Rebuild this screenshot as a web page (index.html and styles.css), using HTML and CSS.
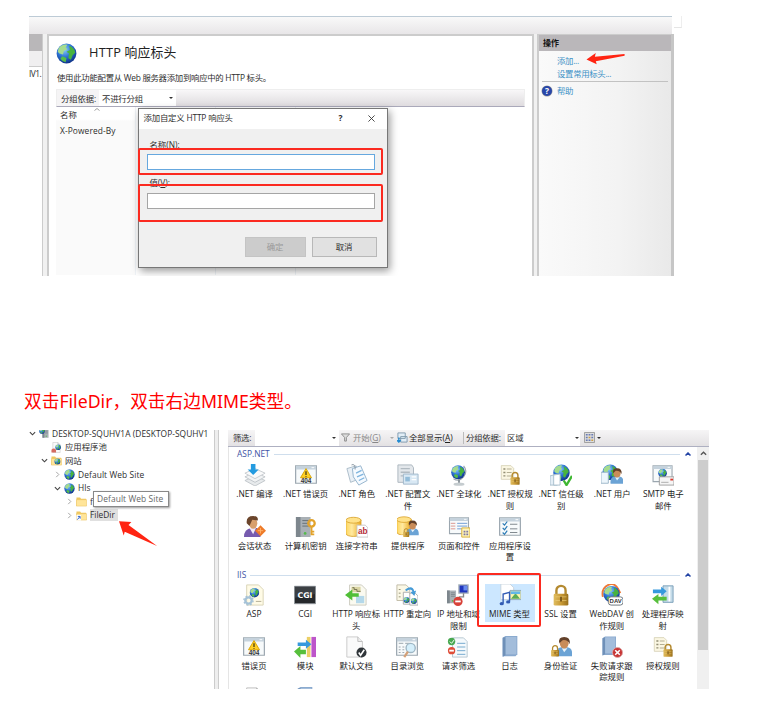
FILE: index.html
```html
<!DOCTYPE html>
<html>
<head>
<meta charset="utf-8">
<title>IIS</title>
<link rel="stylesheet" href="styles.css">
</head>
<body>
<svg class="sprite" width="0" height="0">
  <defs>
    <radialGradient id="sea" cx=".4" cy=".3" r=".75"><stop offset="0" stop-color="#8fd0fa"/><stop offset=".5" stop-color="#2d73d4"/><stop offset="1" stop-color="#0b2c80"/></radialGradient>
    <linearGradient id="gold" x2="1"><stop offset="0" stop-color="#e0bd60"/><stop offset=".5" stop-color="#c99a35"/><stop offset="1" stop-color="#99701c"/></linearGradient>
    <linearGradient id="can" x2="1"><stop offset="0" stop-color="#ffd75e"/><stop offset=".4" stop-color="#ffe9a0"/><stop offset="1" stop-color="#eba91c"/></linearGradient>
    <symbol id="globe" viewBox="0 0 24 24"><circle cx="12" cy="12" r="11.3" fill="url(#sea)"/><path d="M3 6Q7 1 13 2L11 5 13 7 9 9 8 13 4 12 2 10Z" fill="#a5dc8e"/><path d="M15 3Q21 5 22 11L19 14 17 19 14 17 15 12 12 10 16 8Z" fill="#48b33e"/><path d="M7 15L12 17 11 22Q7 21 5 18Z" fill="#56bd48"/></symbol>
    <symbol id="lock" viewBox="0 0 24 24"><path d="M7 12V7a5 5 0 0 1 10 0v5" fill="none" stroke="#b48a30" stroke-width="2.6"/><rect x="4" y="10.500" width="16" height="13" rx="1.500" fill="url(#gold)"/><path d="M6 14h12M6 18h12" stroke="#edce7c" stroke-width=".7"/><path d="M12 14v5" stroke="#76551a" stroke-width="2"/></symbol>
    <symbol id="page" viewBox="0 0 24 24"><path d="M4 1h11l5 5v17H4z" fill="#fafafa" stroke="#bbb"/><path d="M15 1v5h5" fill="#ddd" stroke="#aaa"/></symbol>
    <symbol id="rules" viewBox="0 0 24 24"><path d="M2 1h14l4 4v16H2z" fill="#fbf7e3" stroke="#cfc9ab"/><path d="M5 6h3M5 11h3M5 16h3" stroke="#918d74" stroke-width="2"/><path d="M10 6h7M10 11h7M10 16h7" stroke="#b3ae93" stroke-width="1.500"/></symbol>
    <symbol id="person" viewBox="0 0 24 24"><path d="M2 24Q1 14 8 13h8q7 1 6 11z" fill="#6ba3d5"/><path d="M9 14l3 5 4-5z" fill="#e6f2fa"/><ellipse cx="12" cy="8" rx="5.500" ry="6.500" fill="#c98c59"/><path d="M6 8Q4 0 12 0t7 9Q16 3 10 4Z" fill="#63412a"/></symbol>
    <symbol id="disk" viewBox="0 0 24 24"><path d="M2 4v16c0 5 18 5 18 0V4z" fill="url(#can)" stroke="#d79e27"/><ellipse cx="11" cy="4.500" rx="9" ry="3.500" fill="#ffe28a" stroke="#d9a32d"/></symbol>
    <symbol id="server" viewBox="0 0 24 24"><path d="M3 1h16v22H3z" fill="#a9b0b5"/><path d="M3 1h5v22H3z" fill="#7d868d"/><path d="M10 5h7M10 8h7M10 11h7" stroke="#646d74"/><circle cx="13" cy="19" r="1.500" fill="#54ba4b"/></symbol>
    <symbol id="window" viewBox="0 0 24 24"><path d="M.7 2h22.600v19H.7z" fill="#f7fafb" stroke="#9ba6af" stroke-width="1.300"/><path d="M1 2h22v4H1z" fill="#c5d2dc"/><path d="M18 4h3" stroke="#fff"/></symbol>
    <symbol id="folder" viewBox="0 0 24 24"><path d="M1 3h8l2 3h11v16H1z" fill="#efc75e"/><path d="M1 8h22v14H1z" fill="#ffe59a" stroke="#e8bd55"/></symbol>

    <symbol id="i-compile" viewBox="0 0 24 24"><path d="M1 18l11-5 11 5-11 6z" fill="#e7eaec" stroke="#c0c5c9"/><path d="M1 14l11-5 11 5-11 6z" fill="#f2f4f5" stroke="#c0c5c9"/><path d="M1 10l11-5 11 5-11 6z" fill="#fafafa" stroke="#c6cbcf"/><path d="M7.500 0h5v6H16l-6 6-6-6h3.500z" fill="#249be0"/></symbol>
    <symbol id="i-404" viewBox="0 0 24 24"><use href="#window"/><path d="M12 5l6 10H6z" fill="#ffcf24" stroke="#d9a300"/><path d="M12 8v4M12 13v1" stroke="#473b13" stroke-width="1.400"/><text x="12" y="20.500" text-anchor="middle" class="g404">404</text></symbol>
    <symbol id="i-roles" viewBox="0 0 24 24"><path d="M1 5l10-3 4 14-10 4z" fill="#e9f0f6" stroke="#a9bac7"/><path d="M7 5l9-3 7 16-9 5-6-9z" fill="#f5faff" stroke="#8fb0ca"/><path d="M11 10l6-3M12 14l7-3M14 18l6-3" stroke="#7eb4de" stroke-width="1.500"/><path d="M6 1q4-2 4 5" fill="none" stroke="#8794a0"/></symbol>
    <symbol id="i-profile" viewBox="0 0 24 24"><path d="M1 1h15l2 3v16H1z" fill="#e3e7eb" stroke="#a9b4bc"/><path d="M4 5h10M4 9h10M4 13h6" stroke="#b1bac1" stroke-width="1.500"/><path d="M7 11h16v11H7z" fill="#d8e8f4" stroke="#a0b8ca"/><path d="M9 14h5v5H9z" fill="#93bcd9"/><path d="M16 14h5M16 17h5" stroke="#fff" stroke-width="1.500"/></symbol>
    <symbol id="i-global" viewBox="0 0 24 24"><path d="M17 2q5 6 0 12t-11 2" fill="none" stroke="#9ba6ad" stroke-width="1.300"/><path d="M12 17v4" stroke="#858f96" stroke-width="2"/><ellipse cx="12" cy="22" rx="6" ry="1.700" fill="#c5cccf"/><use href="#globe" x="3" y="1" width="16" height="16"/></symbol>
    <symbol id="i-auth" viewBox="0 0 24 24"><use href="#rules" x="1" width="18" height="20"/><use href="#lock" x="10" y="7" width="15" height="17"/></symbol>
    <symbol id="i-trust" viewBox="0 0 24 24"><use href="#globe" x="3" width="19" height="19"/><path d="M0 13l8-2v12H0z" fill="#e3eef6" stroke="#a5bccb"/><path d="M4 12l7-1v12H4z" fill="#fff" stroke="#a5bccb"/><path d="M15 18l3 5 6-10" fill="none" stroke="#3eb731" stroke-width="2.500"/></symbol>
    <symbol id="i-users" viewBox="0 0 24 24"><use href="#globe" x="1" width="18" height="18"/><path d="M0 9h8v12H0z" fill="#edf6fc" stroke="#99b4c7"/><use href="#person" x="9" y="2" width="17" height="22"/></symbol>
    <symbol id="i-smtp" viewBox="0 0 24 24"><use href="#window" height="22" width="23"/><use href="#globe" x="6" y="5" width="11" height="10"/><path d="M8 14h16v9H8z" fill="#f5f5f5" stroke="#9d9d9d"/><path d="M20 16h3v2h-3z" fill="#d8382c"/><path d="M10 20h8" stroke="#aaa"/></symbol>
    <symbol id="i-session" viewBox="0 0 24 24"><path d="M0 23Q0 14 8 13h6q4 2 4 10z" fill="#765bae"/><path d="M6 13l4 7 3-7z" fill="#f1e9f6"/><ellipse cx="10" cy="8" rx="4.500" ry="6" fill="#d8a06d"/><path d="M3 8Q2 0 10 0q6 0 5 5L9 4 6 11Z" fill="#6b452b"/><path d="M18 10l6 6-6 6-6-6z" fill="#ee7a28"/><path d="M15 16h6M18 13v6" stroke="#ffb26c"/></symbol>
    <symbol id="i-key" viewBox="0 0 24 24"><use href="#server" x="-2" width="24" height="24"/><circle cx="18" cy="8" r="3.500" fill="none" stroke="#e3a32b" stroke-width="2.500"/><path d="M18 11v10M18 17h3M18 20h3" stroke="#e3a32b" stroke-width="2"/></symbol>
    <symbol id="i-conn" viewBox="0 0 24 24"><use href="#disk" x="-2" width="22" height="23"/><path d="M12 10h9l3 3v10H12z" fill="#fff" stroke="#c8c8c8"/><text x="13" y="20" class="gab">ab</text></symbol>
    <symbol id="i-provider" viewBox="0 0 24 24"><use href="#disk" x="-2" width="21" height="21"/><use href="#person" x="9" y="3" width="16" height="20"/><use href="#lock" x="5" y="12" width="10" height="12"/></symbol>
    <symbol id="i-controls" viewBox="0 0 24 24"><use href="#window" height="22" width="24"/><path d="M3 8h5M3 11h5M3 14h5" stroke="#d99289"/><path d="M10 8h11M10 11h11M10 14h5" stroke="#6798d2"/><path d="M15 13h9v10h-9z" fill="#fff4b9" stroke="#d4ac34"/><path d="M17 16h2v2h-2zM20 16h2v2h-2zM17 19h2v2h-2zM20 19h2v2h-2z" fill="#7f78a4"/></symbol>
    <symbol id="i-settings" viewBox="0 0 24 24"><use href="#window"/><path d="M4 8l2 2 3-4M4 13l2 2 3-4M4 18l2 2 3-4" fill="none" stroke="#2a7ab5" stroke-width="1.300"/><path d="M12 9h8M12 14h8M12 18h8" stroke="#767f86"/></symbol>
    <symbol id="gear" viewBox="0 0 24 24"><circle cx="12" cy="12" r="7" fill="none" stroke="#a5c2d7" stroke-width="5"/><circle cx="12" cy="12" r="10" fill="none" stroke="#a5c2d7" stroke-width="3" stroke-dasharray="4 3.850"/></symbol>
    <symbol id="i-asp" viewBox="0 0 24 24"><path d="M4 1h13l5 5v17H4z" fill="#fffbe6" stroke="#d8d2b5"/><use href="#globe" x="7" y="4" width="11" height="11"/><use href="#gear" x="0" y="12" width="12" height="12"/><path d="M14 19h6" stroke="#b0ab93"/></symbol>
    <symbol id="i-cgi" viewBox="0 0 24 24"><path d="M.5 2.500h23v19H.5z" fill="#25282b" stroke="#90979c"/><path d="M1 3h22v8L1 15z" fill="#3b3f43"/><text x="12" y="15" text-anchor="middle" class="gcgi">CGI</text></symbol>
    <symbol id="i-head" viewBox="0 0 24 24"><path d="M5 1h13l5 5v17H5z" fill="#fbfaf0" stroke="#c9c8bc"/><path d="M7 3h10v6H7z" fill="#d9d4a3"/><path d="M8 4h2v2h3v2h4" fill="none" stroke="#716e4d"/><path d="M12 13h9v8h-9z" fill="#b4d8ea"/><path d="M0 12l8-6v4h7v4H8v4z" fill="#51bf37"/></symbol>
    <symbol id="i-redir" viewBox="0 0 24 24"><path d="M1 1h10l4 4v13H1z" fill="#fbf8e6" stroke="#bfbaa5"/><path d="M3 6h2M3 10h2M3 14h2" stroke="#8e8b70"/><path d="M8 9h6l3 3v10H8z" fill="#fff" stroke="#aaa"/><path d="M15 10h6l3 3v10h-9z" fill="#fff" stroke="#aaa"/><use href="#globe" x="8" y="14" width="7" height="7"/><use href="#globe" x="16" y="15" width="7" height="7"/><path d="M10 6q8-6 10 2l2-1-2 6-4-4 2-1q-2-4-7 0z" fill="#459bd7"/></symbol>
    <symbol id="i-ip" viewBox="0 0 24 24"><use href="#server" x="-2" y="5" width="15" height="18"/><path d="M13 1h10v9H13z" fill="#2036bd" stroke="#a8b4bb" stroke-width="1.500"/><path d="M18 2h4v5h-4z" fill="#688bee"/><path d="M18 10v4h-5" fill="none" stroke="#888" stroke-width="1.500"/><circle cx="12" cy="19" r="5" fill="#d84138"/><path d="M9 19h6" stroke="#fff" stroke-width="2"/></symbol>
    <symbol id="i-mime" viewBox="0 0 24 24"><path d="M2 0h10l4 4v13H2z" fill="#fff" stroke="#c8d3dc"/><path d="M12 7h12v10H12z" fill="#fff6aa" stroke="#8aa9bb"/><path d="M13 16l5-6 5 6z" fill="#5bab57"/><path d="M13 8h10v3H13z" fill="#62b7e8"/><path d="M4.500 21V11l7-2v10" fill="none" stroke="#315bb4" stroke-width="1.500"/><ellipse cx="3" cy="21.500" rx="2.300" ry="1.800" fill="#315bb4"/><ellipse cx="10" cy="19.500" rx="2.300" ry="1.800" fill="#315bb4"/></symbol>
    <symbol id="i-dav" viewBox="0 0 24 24"><path d="M2 14Q0 5 8 1t13 9" fill="none" stroke="#ee7936" stroke-width="2"/><use href="#globe" x="2" y="1" width="19" height="20"/><rect x="8" y="14" width="16" height="9" rx="3" fill="#fff" stroke="#677077"/><text x="16" y="21" text-anchor="middle" class="gdav">DAV</text></symbol>
    <symbol id="i-handler" viewBox="0 0 24 24"><path d="M12 2h11v18H12z" fill="#c4dbe9" stroke="#789eb7"/><path d="M19 3v16" stroke="#fff" stroke-width="2"/><path d="M1 6h9V3l6 5-6 5v-3H1z" fill="#3699dd"/><path d="M0 16l7-5v3h9v4H7v4z" fill="#57bf3c"/></symbol>
    <symbol id="i-module" viewBox="0 0 24 24"><path d="M14 1h4v22h-4z" fill="#ebcf65"/><path d="M19 1h5v22h-5z" fill="#bd55ca"/><path d="M4 7h9V4l6 5-6 5v-3H4z" fill="#3699dd"/><path d="M0 17l7-6v4h6v5H7v4z" fill="#57bf3c"/></symbol>
    <symbol id="i-doc" viewBox="0 0 24 24"><path d="M2 1h12l5 5v17H2z" fill="#fafafa" stroke="#c8c8c8"/><path d="M14 1v5h5" fill="#eee" stroke="#bbb"/><circle cx="18" cy="18" r="5.500" fill="#30363a"/><path d="M15 18l2 3 4-6" fill="none" stroke="#fff" stroke-width="1.700"/></symbol>
    <symbol id="i-browse" viewBox="0 0 24 24"><use href="#window"/><path d="M3 8h5M10 8h5M3 12h2M7 12h2M3 15h2M7 15h2M3 18h2M7 18h2" stroke="#96a1aa"/><circle cx="16" cy="13" r="5" fill="#d5effb" stroke="#9eb6c4" stroke-width="1.500"/><path d="M13 17l-4 6" stroke="#d3a078" stroke-width="2.500"/></symbol>
    <symbol id="i-filter" viewBox="0 0 24 24"><path d="M6 2h12l4 4v17H6z" fill="#f4f9fc" stroke="#b5c5cf"/><path d="M11 8h9M11 12h9M11 16h9M11 20h9" stroke="#6ba3cb"/><circle cx="5" cy="6" r="4" fill="#47a850"/><path d="M3 6l2 2 3-4" fill="none" stroke="#fff"/><circle cx="5" cy="16" r="4" fill="#df4c38"/><path d="M2.500 16h5" stroke="#fff" stroke-width="2"/></symbol>
    <symbol id="i-log" viewBox="0 0 24 24"><path d="M4 2l3-2h13v20l-2 2H4z" fill="#89a9ce"/><path d="M7 1h12v19H7z" fill="#a3bddb"/><path d="M4 2l3-1v20l-3 2z" fill="#6f90b8"/></symbol>
    <symbol id="i-ident" viewBox="0 0 24 24"><use href="#person" x="5" width="21" height="23"/><use href="#lock" x="-1" y="8" width="13" height="16"/></symbol>
    <symbol id="i-fail" viewBox="0 0 24 24"><use href="#i-log" x="-2" width="22" height="23"/><circle cx="18" cy="18" r="5.500" fill="#c83535" stroke="#dcaaaa"/><path d="M15.500 15.500l5 5M20.500 15.500l-5 5" stroke="#fff" stroke-width="1.700"/></symbol>
    <symbol id="down" viewBox="0 0 8 8"><path d="M1 2.500l3 3 3-3" fill="none" stroke="#444" stroke-width="1.300"/></symbol>
    <symbol id="right" viewBox="0 0 8 8"><path d="M2.500 1l3 3-3 3" fill="none" stroke="#999"/></symbol>
  </defs>
</svg>

<main class="article">
  <section class="shot headers">
    <div class="topbar"></div>
    <div class="workspace">
      <div class="sliver"><div class="sliver-head"></div><div class="sliver-tool"></div><div class="sliver-text">IV1.</div></div>
      <div class="panel">
        <div class="panel-head"><svg><use href="#globe"/></svg><h1>HTTP 响应标头</h1></div>
        <p class="desc">使用此功能配置从 Web 服务器添加到响应中的 HTTP 标头。</p>
        <div class="groupbar"><span class="grouplabel">分组依据:</span><span class="groupselect">不进行分组<i class="tri"></i></span></div>
        <div class="list"><div class="col first"><span>名称</span><span>X-Powered-By</span><svg class="sort" viewBox="0 0 6 3"><path d="M.5 2.500L3 .5l2.500 2" fill="none" stroke="#777" stroke-width=".7"/></svg></div><div class="col"></div><div class="col"></div></div>
        <div class="dialog">
          <div class="dialog-title"><span>添加自定义 HTTP 响应头</span><b>?</b><svg viewBox="0 0 8 8"><path d="M.5.5l7 7M7.500.5l-7 7" stroke="#333"/></svg></div>
          <div class="dialog-body">
            <label>名称(N):</label><div class="field active"></div>
            <label class="second">值(<u>V</u>):</label><div class="field"></div>
            <div class="buttons"><span class="btn disabled">确定</span><span class="btn">取消</span></div>
          </div>
          <div class="mark name"></div><div class="mark value"></div>
        </div>
      </div>
      <aside class="actions">
        <h2>操作</h2>
        <a>添加...</a><a>设置常用标头...</a>
        <div class="help"><span class="qmark">?</span><a>帮助</a></div>
        <svg class="arrow" viewBox="0 0 42 14"><path d="M0 7L10 0l-1 4 32-3v2L10 9l1 3z" fill="#ff2412"/></svg>
      </aside>
      <div class="edge"></div>
    </div>
    <div class="corner"></div>
  </section>

  <p class="caption">双击FileDir，双击右边MIME类型。</p>

  <section class="shot manager">
    <div class="tree">
      <div class="node l0"><svg class="exp"><use href="#down"/></svg><svg class="ico" viewBox="0 0 24 24"><use href="#server" x="5" width="20" height="24"/><use href="#globe" width="13" height="13"/></svg><span>DESKTOP-SQUHV1A (DESKTOP-SQUHV1</span></div>
      <div class="node l1"><i class="exp"></i><svg class="ico" viewBox="0 0 24 24"><use href="#page" width="24" height="24"/><use href="#globe" x="9" y="5" width="13" height="13"/><path d="M1 17q5-6 10 0v6H1z" fill="#d56b60"/></svg><span>应用程序池</span></div>
      <div class="node l1"><svg class="exp"><use href="#down"/></svg><svg class="ico" viewBox="0 0 24 24"><use href="#folder"/><use href="#globe" x="7" y="7" width="14" height="14"/></svg><span>网站</span></div>
      <div class="node l2"><svg class="exp"><use href="#right"/></svg><svg class="ico"><use href="#globe"/></svg><span>Default Web Site</span></div>
      <div class="node l2"><svg class="exp"><use href="#down"/></svg><svg class="ico"><use href="#globe"/></svg><span>Hls</span></div>
      <div class="node l3"><svg class="exp"><use href="#right"/></svg><svg class="ico"><use href="#folder"/></svg><span>f</span></div>
      <div class="node l3 sel"><svg class="exp"><use href="#right"/></svg><svg class="ico" viewBox="0 0 24 24"><use href="#folder"/><path d="M1 11h10v12H1z" fill="#fff"/><path d="M3 21l5-6M4 14h5v5" fill="none" stroke="#285dc4" stroke-width="2"/></svg><span>FileDir</span></div>
      <div class="tip">Default Web Site</div>
      <svg class="point" viewBox="0 0 42 28"><path d="M0 0l13 1-3 3L40 26 6 11l-1 4z" fill="#ff2412"/></svg>
    </div>
    <div class="split"></div>
    <div class="features">
      <div class="toolbar">
        <span class="tl">筛选:</span><span class="filterbox"><i class="tri"></i></span>
        <svg class="funnel" viewBox="0 0 10 10"><path d="M.5 1h9L6 5v4H4V5z" fill="#ddd" stroke="#888"/></svg><span class="go">开始(<u>G</u>)</span><i class="tri dim"></i>
        <svg class="showall" viewBox="0 0 12 12"><path d="M1 1h8v6H1zM4 5h7v6H4z" fill="#e2eef7" stroke="#7e98ac"/><path d="M2 6v5M0 9l2 2 2-2" fill="none" stroke="#238bd1" stroke-width="1.500"/></svg><span class="all">全部显示(<u>A</u>)</span>
        <span class="gl">分组依据:</span><span class="areabox">区域<i class="tri"></i></span>
        <svg class="view" viewBox="0 0 12 12"><path d="M.5.5h11v11H.5z" fill="#ddd" stroke="#999"/><path d="M2 3h2M5 3h2M8 3h2M2 6h2M8 6h2M2 9h2M5 9h2" stroke="#697bb2" stroke-width="1.500"/><path d="M5 6h2M8 9h2" stroke="#cf9f43" stroke-width="1.500"/></svg><i class="tri"></i>
      </div>
      <div class="content">
        <div class="groups">
          <div class="group-title"><span>ASP.NET</span><hr><svg viewBox="0 0 6 4"><path d="M.5 3.500L3 1l2.500 2.500" fill="none" stroke="#2445a5" stroke-width="1.500"/></svg></div>
          <div class="grid">
            <div class="item"><svg><use href="#i-compile"/></svg><span>.NET 编译</span></div>
            <div class="item"><svg><use href="#i-404"/></svg><span>.NET 错误页</span></div>
            <div class="item"><svg><use href="#i-roles"/></svg><span>.NET 角色</span></div>
            <div class="item"><svg><use href="#i-profile"/></svg><span>.NET 配置文<br>件</span></div>
            <div class="item"><svg><use href="#i-global"/></svg><span>.NET 全球化</span></div>
            <div class="item"><svg><use href="#i-auth"/></svg><span>.NET 授权规<br>则</span></div>
            <div class="item"><svg><use href="#i-trust"/></svg><span>.NET 信任级<br>别</span></div>
            <div class="item"><svg><use href="#i-users"/></svg><span>.NET 用户</span></div>
            <div class="item"><svg><use href="#i-smtp"/></svg><span>SMTP 电子<br>邮件</span></div>
            <div class="item"><svg><use href="#i-session"/></svg><span>会话状态</span></div>
            <div class="item"><svg><use href="#i-key"/></svg><span>计算机密钥</span></div>
            <div class="item"><svg><use href="#i-conn"/></svg><span>连接字符串</span></div>
            <div class="item"><svg><use href="#i-provider"/></svg><span>提供程序</span></div>
            <div class="item"><svg><use href="#i-controls"/></svg><span>页面和控件</span></div>
            <div class="item"><svg><use href="#i-settings"/></svg><span>应用程序设<br>置</span></div>
          </div>
          <div class="group-title iis"><span>IIS</span><hr><svg viewBox="0 0 6 4"><path d="M.5 3.500L3 1l2.500 2.500" fill="none" stroke="#2445a5" stroke-width="1.500"/></svg></div>
          <div class="grid lower">
            <div class="item"><svg><use href="#i-asp"/></svg><span>ASP</span></div>
            <div class="item"><svg><use href="#i-cgi"/></svg><span>CGI</span></div>
            <div class="item"><svg><use href="#i-head"/></svg><span>HTTP 响应标<br>头</span></div>
            <div class="item"><svg><use href="#i-redir"/></svg><span>HTTP 重定向</span></div>
            <div class="item"><svg><use href="#i-ip"/></svg><span>IP 地址和域<br>限制</span></div>
            <div class="item chosen"><svg><use href="#i-mime"/></svg><span>MIME 类型</span><div class="mark mime"></div></div>
            <div class="item"><svg><use href="#lock"/></svg><span>SSL 设置</span></div>
            <div class="item"><svg><use href="#i-dav"/></svg><span>WebDAV 创<br>作规则</span></div>
            <div class="item"><svg><use href="#i-handler"/></svg><span>处理程序映<br>射</span></div>
            <div class="item"><svg><use href="#i-404"/></svg><span>错误页</span></div>
            <div class="item"><svg><use href="#i-module"/></svg><span>模块</span></div>
            <div class="item"><svg><use href="#i-doc"/></svg><span>默认文档</span></div>
            <div class="item"><svg><use href="#i-browse"/></svg><span>目录浏览</span></div>
            <div class="item"><svg><use href="#i-filter"/></svg><span>请求筛选</span></div>
            <div class="item"><svg><use href="#i-log"/></svg><span>日志</span></div>
            <div class="item"><svg><use href="#i-ident"/></svg><span>身份验证</span></div>
            <div class="item"><svg><use href="#i-fail"/></svg><span>失败请求跟<br>踪规则</span></div>
            <div class="item"><svg><use href="#i-auth"/></svg><span>授权规则</span></div>
            <div class="item"><svg><use href="#page"/></svg></div>
            <div class="item"><svg><use href="#i-log"/></svg></div>
          </div>
        </div>
        <div class="scroll"><svg viewBox="0 0 8 8"><path d="M1 5.500l3-3 3 3" fill="none" stroke="#555" stroke-width="1.500"/></svg><div class="thumb"></div></div>
      </div>
    </div>
  </section>
</main>
</body>
</html>
```
FILE: styles.css
```css
* { box-sizing: border-box; }
body { margin: 0; background: #fff; color: #2e2e2e; font: 8.4px/12px "Open Sans", "Noto Sans CJK SC", sans-serif; overflow: hidden; }
.sprite { position: absolute; }
.article { padding: 16px 0 0 29px; height: 710px; overflow: hidden; }
.shot { position: relative; overflow: hidden; white-space: nowrap; }
svg { display: block; flex: none; }
u { text-underline-offset: 1px; }
.tri { width: 0; height: 0; flex: none; border: 2px solid transparent; border-top: 2.5px solid #333; border-bottom: 0; }
.tri.dim { border-top-color: #aaa; }

.headers { width: 653px; height: 260px; }
.topbar { width: 643px; height: 18px; border-top: 1px solid #bdcbd6; background: linear-gradient(#f9f9f9, #e8e6e8); }
.workspace { display: flex; height: 242px; background: #f1f1f1; width: 645px; }
.sliver { width: 14px; background: #fff; border-right: 1px solid #ccc; overflow: hidden; }
.sliver-head { height: 17px; background: #b9b7b9; }
.sliver-tool { height: 16px; background: #f0eff0; border-bottom: 1px solid #ccc; }
.sliver-text { margin: 1px 0 0; letter-spacing: -.5px; }
.panel { position: relative; width: 487px; margin-left: 4px; background: #fff; border: 2px solid #ccc; border-bottom: 0; padding-left: 7px; }
.panel-head { display: flex; align-items: center; height: 32px; }
.panel-head svg { width: 21px; height: 21px; margin-top: 2px; }
h1 { margin: -1px 0 0 12px; font-size: 12.8px; letter-spacing: .2px; font-weight: 400; line-height: 20px; color: #222; }
.desc { margin: 4px 0 5px 1px; letter-spacing: -.27px; }
.groupbar { display: flex; width: 469px; height: 18px; line-height: 17px; border: 1px solid #eee; border-bottom: 1px solid #aaa9ba; background: linear-gradient(#f8f7f8, #dfdcdf); }
.grouplabel { width: 42px; padding-left: 4px; letter-spacing: -.1px; background: #f5f4f5; }
.groupselect { width: 77px; background: #fff; display: flex; align-items: center; justify-content: space-between; padding: 0 3px; letter-spacing: -.2px; }
.list { display: flex; height: 168px; }
.col { width: 80px; border-right: 1px solid #eff3f7; }
.first { position: relative; display: flex; flex-direction: column; gap: 4px; padding: 2px 4px; letter-spacing: .1px; background: linear-gradient(#fff 12px, #fafafa 14px); }
.sort { position: absolute; width: 6px; height: 3px; left: 38px; top: 1px; }
.dialog { position: absolute; left: 88.500px; top: 71.500px; width: 250px; height: 160px; border: 1px solid #777; background: #f0f0f0; box-shadow: 2px 3px 8px #0006; }
.dialog-title { display: flex; align-items: center; height: 20px; background: #fff; padding: 0 12px 1px 5px; }
.dialog-title span { letter-spacing: -.18px; }
.dialog-title b { margin: 0 25px 0 auto; }
.dialog-title svg { width: 7px; height: 7px; }
.dialog-body { padding: 10px 12px 0 8px; }
.dialog-body label { display: block; height: 12px; margin: 0 0 3px 3px; }
.dialog-body label.second { margin-top: 7px; margin-bottom: 4px; }
.field { height: 16px; border: 1px solid #a5a5a5; background: #fff; }
.field.active { border-color: #66a8df; }
.buttons { display: flex; gap: 6px; justify-content: flex-end; margin: 28px -2px 0 0; }
.btn { width: 65px; height: 20px; line-height: 18px; text-align: center; background: #e1e1e1; border: 1px solid #b8b8b8; }
.btn.disabled { width: 61px; color: #999; background: #ccc; border-color: #c4c4c4; }
.mark { position: absolute; border: 2px solid #fb2a20; border-radius: 2px; }
.mark.name { left: -1px; top: 39px; width: 245px; height: 27px; }
.mark.value { left: -1px; top: 75px; width: 245px; height: 38px; }
.actions { position: relative; width: 134px; margin-left: 3px; border-left: 2px solid #ccc; background: linear-gradient(90deg, #fafafa, #f3f3f3 60%, #e9e9e9); }
.actions h2 { height: 17px; margin: 0 0 3px; padding-left: 4px; background: #bab7ba; font-size: 8px; font-weight: 600; line-height: 16px; color: #111; border-top: 1px solid #ccc; }
.actions a { display: block; margin-left: 18px; height: 13px; line-height: 13px; letter-spacing: -.3px; color: #3d91c6; }
.help { display: flex; align-items: center; height: 18px; margin: 1px 3px 0 3px; border-top: 1px solid #c2c2c2; }
.help a { margin-left: 5px; }
.qmark { width: 10px; height: 10px; border-radius: 5px; background: #2947a9; box-shadow: 0 0 0 .5px #999; color: #fff; text-align: center; line-height: 10px; font-weight: 700; }
.arrow { position: absolute; left: 46px; top: 19px; width: 42px; height: 13px; }
.edge { width: 3px; background: #c6c6c6; }
.corner { position: absolute; left: 645px; top: 0; width: 8px; height: 12px; border-right: 1px solid #eee; border-bottom: 1px solid #e5e5e5; }

.caption { margin: 112px 0 0 -5px; height: 26px; line-height: 26px; font-family: "Noto Sans", "Noto Sans CJK SC", sans-serif; font-size: 17.7px; color: #f00; white-space: nowrap; }
.manager { display: flex; width: 680px; height: 259px; margin-top: 16px; }
.tree { position: relative; width: 185px; overflow: hidden; margin-top: -3px; }
.node { display: flex; align-items: center; height: 13.6px; }
.node .exp { width: 7px; height: 7px; }
.node .ico { width: 11px; height: 11px; margin: 0 3px; }
.node span { flex: none; }
.l0 .ico { margin-right: 2px; }
.l0 span { letter-spacing: .05px; }
.l1 { padding-left: 12px; }
.l2 { padding-left: 25px; }
.l2 span { letter-spacing: .1px; }
.l3 { padding-left: 37px; }
.sel span { background: #e0e0e0; padding-right: 3px; }
.tip { position: absolute; left: 64px; top: 64px; width: 76px; height: 16px; padding-left: 3px; line-height: 14px; letter-spacing: .1px; color: #666; border: 1px solid #888; background: #fff; box-shadow: 1px 1px 2px #0006; }
.point { position: absolute; left: 90px; top: 94px; width: 40px; height: 27px; }
.split { width: 5px; background: #eee; border-left: 1px solid #ccc; border-right: 1px solid #ccc; }
.features { width: 481px; margin-left: 9px; }
.toolbar { display: flex; align-items: center; height: 17px; padding-bottom: 1px; background: linear-gradient(#f6f5f6, #e3e1e3); border-bottom: 1px solid #aeb0c1; }
.toolbar > * { flex: none; }
.tl { width: 27px; padding-left: 5px; letter-spacing: -.3px; }
.filterbox { width: 84px; height: 16px; background: #fff; display: flex; align-items: center; justify-content: flex-end; padding-right: 3px; }
.funnel { width: 9px; height: 9px; margin-left: 2px; }
.go { width: 44px; padding-left: 3px; color: #888; }
.tri.dim { margin-left: -4px; margin-right: 3px; }
.showall { width: 11px; height: 11px; margin: 0 1px 0 0; }
.all { width: 54px; color: #222; }
.gl { width: 42px; border-left: 1px solid #bbb; padding-left: 2px; letter-spacing: -.2px; }
.areabox { width: 75px; height: 16px; background: #fff; display: flex; align-items: center; justify-content: space-between; padding: 0 1px 0 2px; }
.view { width: 11px; height: 11px; margin: 0 2px 0 4px; }
.content { display: flex; height: 242px; }
.groups { width: 469px; border-left: 1px solid #e5e5e5; overflow: hidden; }
.group-title { display: flex; align-items: center; height: 14px; padding: 0 6px 0 8px; color: #3e53a5; }
.group-title hr { flex: 1; margin: 0 5px 0 4px; border: 0; border-top: 1px solid #cfdeed; }
.group-title svg { width: 6px; height: 4px; }
.grid { display: grid; grid-template-columns: repeat(9, 51.1px); grid-auto-rows: 51.6px; padding-top: 3px; }
.grid.lower { padding-top: 2px; margin-left: -.5px; }
.item { position: relative; display: flex; flex-direction: column; align-items: center; height: 48px; color: #222; text-align: center; line-height: 11.7px; }
.item svg { width: 22px; height: 22px; margin-bottom: 2px; }
.group-title.iis { margin-top: 1px; }
.chosen { background: linear-gradient(#cce7ff, #cce7ff) center 0 / 50px 38px no-repeat; }
.mark.mime { left: -7px; top: -11px; width: 64px; height: 54px; }
.scroll { width: 12px; background: #f0f0f0; display: flex; flex-direction: column; align-items: center; padding-top: 3px; }
.scroll svg { width: 7px; height: 7px; margin-bottom: 3px; }
.thumb { width: 10px; height: 190px; background: #cdcdcd; }
.g404 { font: 700 7px "Liberation Sans"; fill: #333; }
.gab { font: 700 9px "Liberation Sans"; fill: #b52c36; }
.gcgi { font: 700 8.5px "DejaVu Sans"; fill: #fff; }
.gdav { font: 700 6.5px "Liberation Sans"; fill: #333; }
```
